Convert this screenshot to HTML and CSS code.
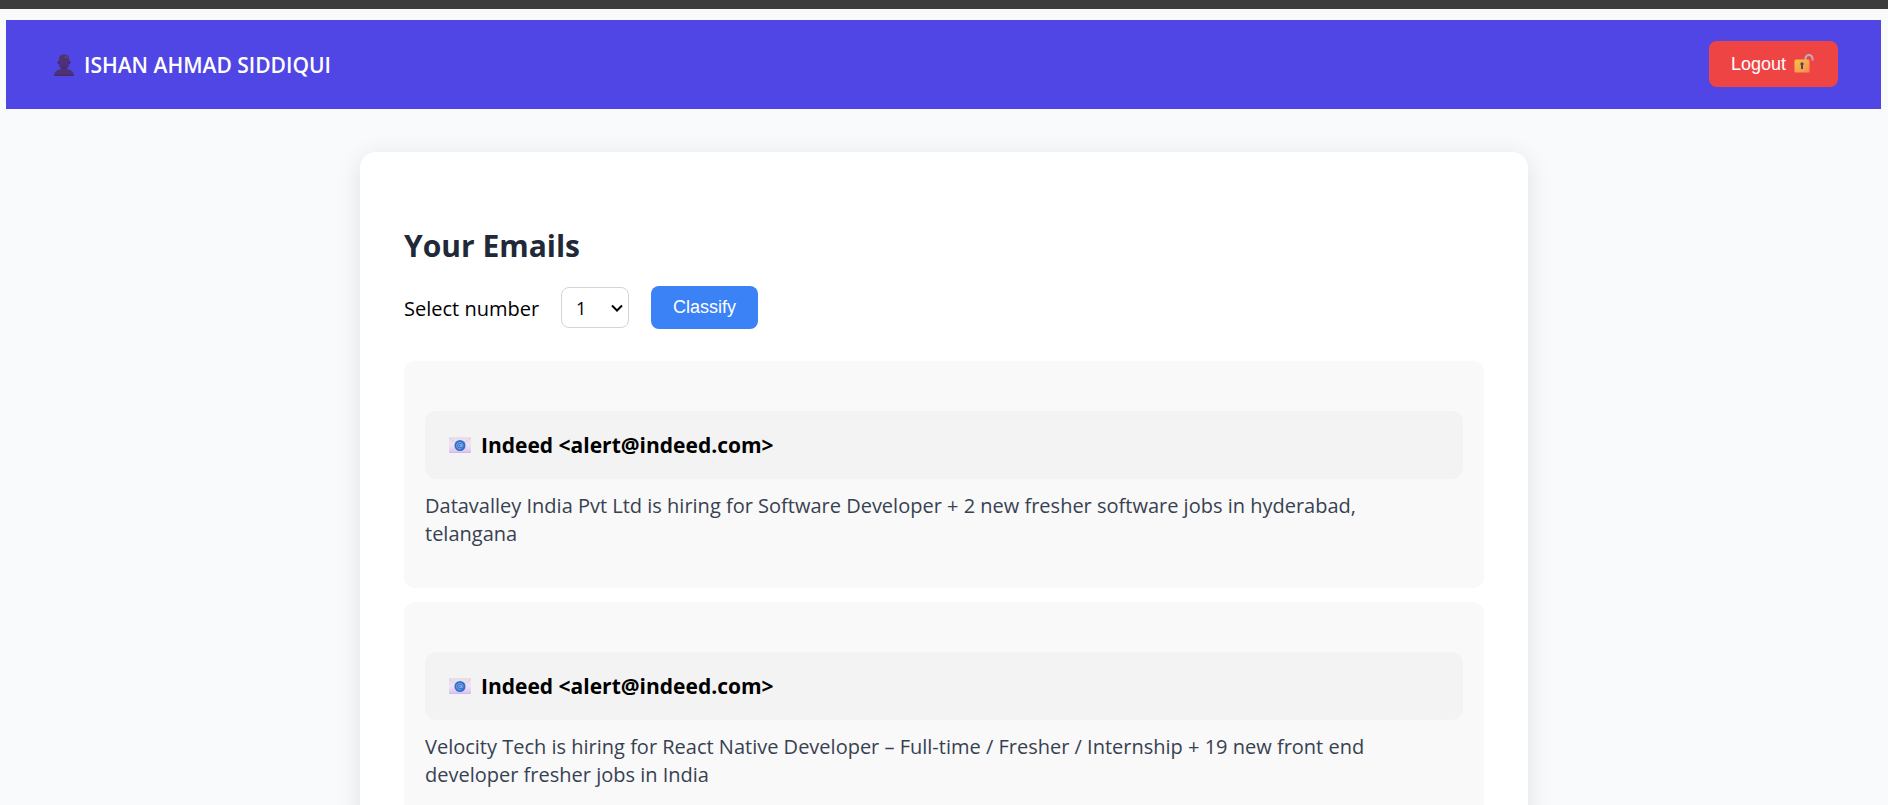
FILE: index.html
```html
<!DOCTYPE html>
<html lang="en">
<head>
<meta charset="utf-8">
<meta name="viewport" content="width=device-width, initial-scale=1">
<title>Your Emails</title>
<link rel="stylesheet" href="styles.css">
</head>
<body>
<div class="top-strip"></div>
<svg class="sprite" aria-hidden="true">
  <defs>
    <linearGradient id="bust" x1="0" y1="0" x2="0" y2="1">
      <stop offset="0" stop-color="#4d3566"/>
      <stop offset="0.6" stop-color="#4f2f80"/>
      <stop offset="1" stop-color="#4a2a6c"/>
    </linearGradient>
    <linearGradient id="paper" x1="0" y1="0" x2="0" y2="1">
      <stop offset="0" stop-color="#e6dde6"/>
      <stop offset="0.5" stop-color="#eee4f6"/>
      <stop offset="1" stop-color="#dcc4ee"/>
    </linearGradient>
    <linearGradient id="brass" x1="0" y1="0" x2="1" y2="1">
      <stop offset="0" stop-color="#fcc544"/>
      <stop offset="1" stop-color="#f48a50"/>
    </linearGradient>
  </defs>
  <symbol id="mail" viewBox="0 0 22 16">
    <rect width="22" height="16" rx="1" fill="url(#paper)"/>
    <path d="M0 1l8 6M22 1l-8 6M0 15l7-5M22 15l-7-5" stroke="#d9cbe2" stroke-width="0.7" fill="none"/>
    <path d="M0.5 15.3h21" stroke="#d4b4e8" stroke-width="1"/>
    <circle cx="11" cy="8.500" r="5.500" fill="#2f70cc"/>
    <circle cx="10.800" cy="8.500" r="1.300" fill="none" stroke="#b4caee" stroke-width="0.7"/>
    <path d="M12.300 7v2.200c0 1.200 1.700.9 1.700-.7a3.200 3.200 0 1 0-1.400 2.700" fill="none" stroke="#a4bfea" stroke-width="0.7"/>
  </symbol>
</svg>

<header class="navbar">
  <div class="user">
    <svg class="user-icon" viewBox="0 0 22 22" aria-hidden="true">
      <path d="M1 22c0-4.500 3.500-7 10-7s10 2.500 10 7z" fill="url(#bust)"/>
      <rect x="4.500" y="6.500" width="13" height="4" rx="2" fill="#432a70"/>
      <path d="M6 4.500Q6 .5 11 .5t5 4V10q0 5-5 5.500Q6 15 6 10z" fill="url(#bust)"/>
      <path d="M11.500 3.200q2.500-.7 3.500.6" stroke="#6b5580" stroke-width="0.8" fill="none"/>
    </svg>
    <span>ISHAN AHMAD SIDDIQUI</span>
  </div>
  <button class="btn btn-logout" type="button">
    Logout
    <svg class="lock-icon" viewBox="0 0 20 20" aria-hidden="true">
      <path d="M11.500 7V4.500a3.500 3.500 0 0 1 7 0V6.500" fill="none" stroke="#b8aebc" stroke-width="2"/>
      <rect x="0.500" y="5.500" width="15" height="13" rx="1.500" fill="url(#brass)"/>
      <path d="M6.300 10a1.700 1.700 0 0 1 3.400 0l-.7 1.500V15H7v-3.500z" fill="#4c4760"/>
    </svg>
  </button>
</header>

<main class="card">
  <h2 class="title">Your Emails</h2>
  <form class="controls">
    <label for="count">Select number</label>
    <div class="count-box">
      <select id="count" class="count">
        <option>1</option>
        <option>2</option>
        <option>3</option>
        <option>4</option>
        <option>5</option>
      </select>
      <svg class="chevron" viewBox="0 0 12 8" aria-hidden="true">
        <path d="M1 1.500l5 5 5-5" fill="none" stroke="#000" stroke-width="2"/>
      </svg>
    </div>
    <button class="btn btn-classify" type="button">Classify</button>
  </form>
  <div class="emails">
    <article class="email">
      <h4 class="sender"><svg class="mail-icon" aria-hidden="true"><use href="#mail"/></svg><span>Indeed &lt;alert@indeed.com&gt;</span></h4>
      <p class="subject">Datavalley India Pvt Ltd is hiring for Software Developer + 2 new fresher software jobs in hyderabad, telangana</p>
    </article>
    <article class="email">
      <h4 class="sender"><svg class="mail-icon" aria-hidden="true"><use href="#mail"/></svg><span>Indeed &lt;alert@indeed.com&gt;</span></h4>
      <p class="subject">Velocity Tech is hiring for React Native Developer – Full-time / Fresher / Internship + 19 new front end developer fresher jobs in India</p>
    </article>
  </div>
</main>
</body>
</html>
```
FILE: styles.css
```css
* {
  box-sizing: border-box;
}

html {
  background: #f9fafc;
}

body {
  margin: 0;
  font-family: "Segoe UI", "Open Sans", "Noto Sans", sans-serif;
  font-size: 20px;
  line-height: 28px;
  color: #000;
}

.top-strip {
  height: 9px;
  background: #3c3c3c;
}

.sprite {
  position: absolute;
  width: 0;
  height: 0;
}

.navbar {
  display: flex;
  align-items: center;
  justify-content: space-between;
  margin: 11px 7px 0 6px;
  padding: 21px 43px 22px 47px;
  background: #4f46e5;
  color: #fff;
}

.user {
  display: flex;
  align-items: center;
  gap: 9px;
  padding-top: 2px;
  font-size: 21px;
  font-weight: 600;
}

.user-icon {
  width: 22px;
  height: 22px;
}

.btn {
  border: 0;
  border-radius: 8px;
  color: #fff;
  font-family: "Liberation Sans", Arial, sans-serif;
  font-size: 18px;
  cursor: pointer;
}

.btn-logout {
  display: flex;
  align-items: center;
  gap: 8px;
  height: 46px;
  padding: 0 24px 0 22px;
  background: #ef4444;
}

.lock-icon {
  width: 20px;
  height: 20px;
}

.card {
  max-width: 1168px;
  margin: 43px auto 0;
  padding: 72px 44px 44px;
  border-radius: 16px;
  background: #fff;
  box-shadow: 0 5px 27px rgba(0, 0, 0, 0.1);
}

.title {
  margin: 0;
  font-size: 30px;
  line-height: 44px;
  color: #1f2937;
}

.controls {
  display: flex;
  align-items: center;
  gap: 22px;
  margin: 18px 0 32px;
}

.controls label {
  padding-top: 3px;
}

.count-box {
  display: grid;
  align-items: center;
}

.count,
.chevron {
  grid-area: 1 / 1;
}

.count {
  appearance: none;
  width: 68px;
  height: 41px;
  padding: 0 24px 0 14px;
  border: 1px solid #d1d5db;
  border-radius: 8px;
  background: #fff;
  color: #000;
  font-family: inherit;
  font-size: 18px;
}

.chevron {
  justify-self: end;
  width: 12px;
  height: 8px;
  margin-right: 6px;
  pointer-events: none;
}

.btn-classify {
  height: 43px;
  padding: 0 22px;
  background: #3b82f6;
}

.emails {
  display: flex;
  flex-direction: column;
  gap: 14px;
}

.email {
  padding: 50px 21px 40px;
  border-radius: 11px;
  background: #f9f9f9;
}

.sender {
  display: flex;
  align-items: center;
  gap: 10px;
  margin: 0 0 13px;
  padding: 20px 24px;
  border-radius: 11px;
  background: #f3f3f3;
  font-size: 21px;
  font-weight: 700;
}

.mail-icon {
  width: 22px;
  height: 16px;
}

.subject {
  margin: 0;
  padding-right: 44px;
  color: #374151;
}
```
